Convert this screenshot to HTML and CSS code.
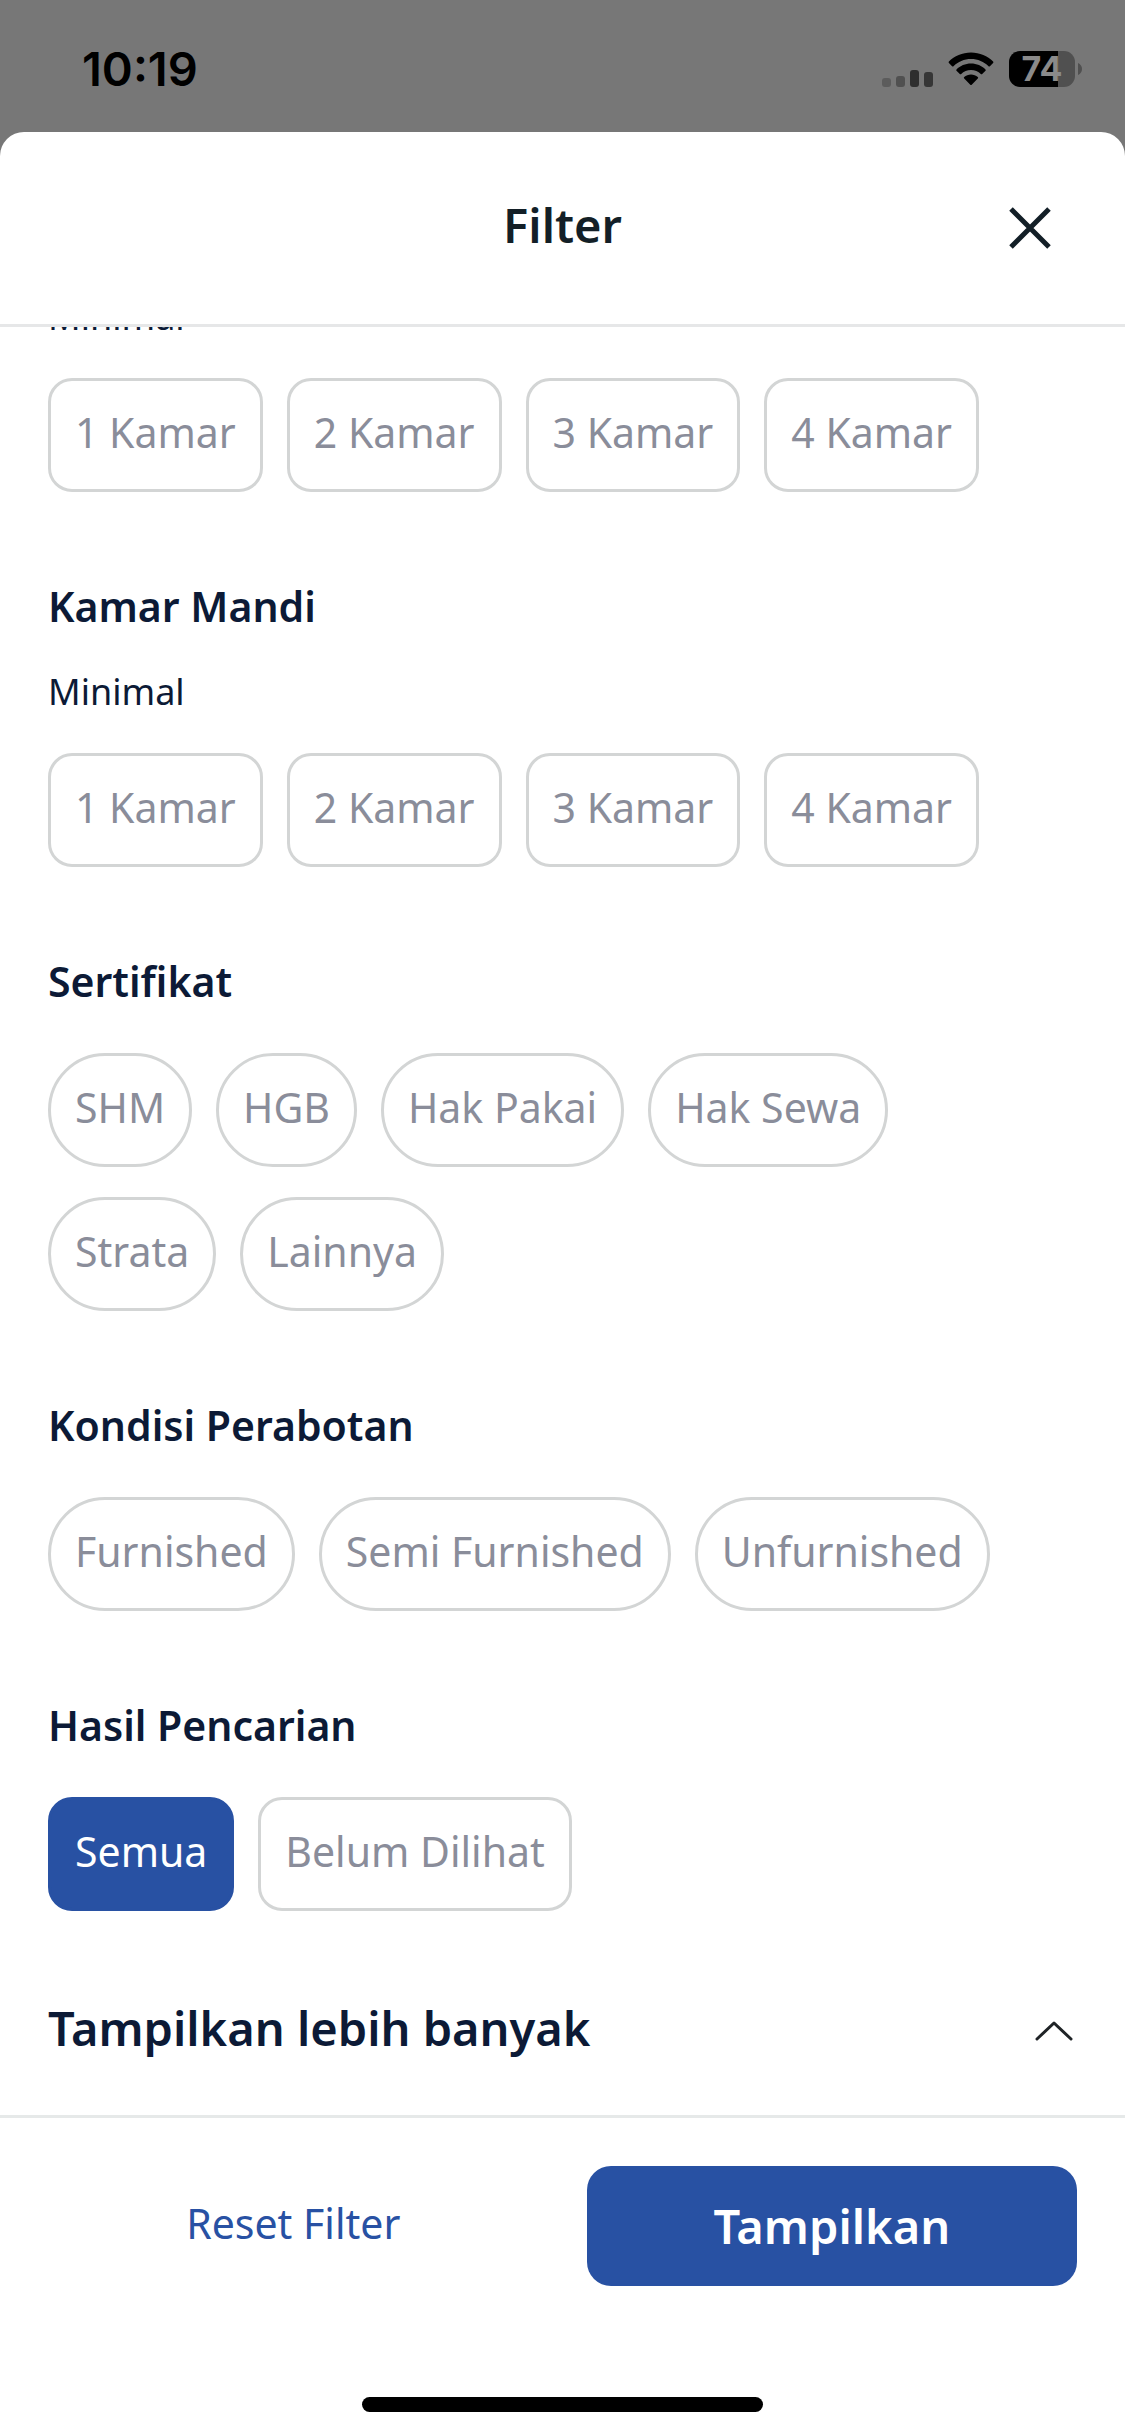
FILE: index.html
```
<!DOCTYPE html>
<html lang="id">
<head>
  <meta charset="UTF-8">
  <meta name="viewport" content="width=device-width, initial-scale=1.0">
  <title>Filter</title>
  <link rel="stylesheet" href="styles.css">
</head>
<body>

  <div class="status-bar">
    <span class="status-time">10:19</span>
    <div class="status-icons">
      <svg class="icon-signal" viewBox="0 0 51 18" width="51" height="18" aria-hidden="true">
        <rect x="0" y="9" width="9" height="9" rx="3" fill="#5c5c5c"/>
        <rect x="14" y="7" width="9" height="11" rx="3" fill="#505050"/>
        <rect x="28" y="1" width="9" height="17" rx="3" fill="#2e2e2e"/>
        <rect x="42" y="3" width="9" height="15" rx="3" fill="#363636"/>
      </svg>
      <svg class="icon-wifi" viewBox="0 0 46 34" width="46" height="34" aria-hidden="true">
        <path d="M23 0.5C14.2 0.5 6.4 4 0.9 9.6a1 1 0 0 0 0 1.4l3.2 3.2a1 1 0 0 0 1.4 0C10 9.7 16.200 7 23 7s13 2.700 17.500 7.200a1 1 0 0 0 1.400 0l3.200-3.200a1 1 0 0 0 0-1.400C39.600 4 31.800 0.500 23 0.500z"/>
        <path d="M23 11.500c-5.700 0-10.800 2.300-14.500 5.900a1 1 0 0 0 0 1.400l3.300 3.200a1 1 0 0 0 1.400 0c2.500-2.500 6-4 9.800-4s7.300 1.500 9.800 4a1 1 0 0 0 1.400 0l3.300-3.200a1 1 0 0 0 0-1.400C33.800 13.800 28.700 11.500 23 11.500z"/>
        <path d="M23 22.500c-2.600 0-5 1-6.800 2.600a1 1 0 0 0 0 1.500l6.100 6.100a1 1 0 0 0 1.400 0l6.100-6.100a1 1 0 0 0 0-1.500C28 23.500 25.600 22.500 23 22.500z"/>
      </svg>
      <div class="battery">
        <span class="battery-level">74</span>
        <svg viewBox="0 0 4 12" width="4" height="12" aria-hidden="true"><path d="M0 0c2.500 1 4 3.400 4 6s-1.500 5-4 6z" fill="#505050"/></svg>
      </div>
    </div>
  </div>

  <main class="sheet">
    <header class="sheet-header">
      <h1 class="sheet-title">Filter</h1>
      <button type="button" class="btn-close" aria-label="Tutup">
        <svg viewBox="0 0 42 42" width="42" height="42"><path d="M2 2l38 38M40 2L2 40" stroke="#131f27" stroke-width="5" fill="none"/></svg>
      </button>
    </header>

    <div class="sheet-content">
      <section class="filter-group">
        <p class="filter-label">Minimal</p>
        <div class="chips">
          <button type="button" class="chip">1 Kamar</button>
          <button type="button" class="chip">2 Kamar</button>
          <button type="button" class="chip">3 Kamar</button>
          <button type="button" class="chip">4 Kamar</button>
        </div>
      </section>

      <section class="filter-group">
        <h2 class="filter-title">Kamar Mandi</h2>
        <p class="filter-label">Minimal</p>
        <div class="chips">
          <button type="button" class="chip">1 Kamar</button>
          <button type="button" class="chip">2 Kamar</button>
          <button type="button" class="chip">3 Kamar</button>
          <button type="button" class="chip">4 Kamar</button>
        </div>
      </section>

      <section class="filter-group">
        <h2 class="filter-title">Sertifikat</h2>
        <div class="chips">
          <button type="button" class="chip chip-round">SHM</button>
          <button type="button" class="chip chip-round">HGB</button>
          <button type="button" class="chip chip-round">Hak Pakai</button>
          <button type="button" class="chip chip-round">Hak Sewa</button>
          <button type="button" class="chip chip-round">Strata</button>
          <button type="button" class="chip chip-round">Lainnya</button>
        </div>
      </section>

      <section class="filter-group">
        <h2 class="filter-title">Kondisi Perabotan</h2>
        <div class="chips">
          <button type="button" class="chip chip-round">Furnished</button>
          <button type="button" class="chip chip-round">Semi Furnished</button>
          <button type="button" class="chip chip-round">Unfurnished</button>
        </div>
      </section>

      <section class="filter-group">
        <h2 class="filter-title">Hasil Pencarian</h2>
        <div class="chips">
          <button type="button" class="chip chip-active" aria-pressed="true">Semua</button>
          <button type="button" class="chip" aria-pressed="false">Belum Dilihat</button>
        </div>
      </section>

      <button type="button" class="btn-more" aria-expanded="true">
        Tampilkan lebih banyak
        <svg viewBox="0 0 38 26" width="38" height="26" aria-hidden="true"><path d="M2 24L19 8l17 16" stroke="#1f2326" stroke-width="3" stroke-linecap="round" stroke-linejoin="round" fill="none"/></svg>
      </button>
    </div>

    <footer class="sheet-footer">
      <div class="actions">
        <button type="button" class="btn-reset">Reset Filter</button>
        <button type="button" class="btn-apply">Tampilkan</button>
      </div>
      <div class="home-indicator"></div>
    </footer>
  </main>

</body>
</html>
```

FILE: styles.css
```
* { margin: 0; padding: 0; box-sizing: border-box; }
body {
  display: flex;
  flex-direction: column;
  height: 100vh;
  background-color: #777777;
  color: #0c1a36;
  font-family: 'Noto Sans', 'Open Sans', sans-serif;
}
button { font-family: inherit; border: none; background: none; color: inherit; cursor: pointer; }
svg { display: block; flex-shrink: 0; }

/* Status bar */
.status-bar {
  display: flex;
  justify-content: space-between;
  align-items: center;
  height: 132px;
  padding: 6px 43px 0 82px;
  color: #000000;
  font-family: 'Inter', sans-serif;
}
.status-time { font-size: 47px; font-weight: 600; line-height: 56px; }
.status-icons { display: flex; align-items: center; gap: 15px; }
.icon-signal { align-self: flex-end; }
.battery { display: flex; align-items: center; gap: 3px; }
.battery-level {
  width: 66px;
  border-radius: 11px;
  background: linear-gradient(to right, #000000 74%, #505050 74%);
  color: #8a8a8a;
  font-size: 34px;
  font-weight: 700;
  line-height: 36px;
  text-align: center;
}

/* Sheet */
.sheet {
  flex: 1;
  min-height: 0;
  display: flex;
  flex-direction: column;
  background-color: #ffffff;
  border-radius: 24px 24px 0 0;
}
.sheet-header {
  display: grid;
  grid-template-columns: 1fr auto 1fr;
  align-items: center;
  height: 195px;
  padding: 0 74px;
  border-bottom: 3px solid #e6e7e8;
  color: #131f27;
}
.sheet-title { grid-column: 2; font-size: 47px; font-weight: 600; line-height: 60px; padding-bottom: 6px; }
.btn-close { justify-self: end; }

.sheet-content {
  flex: 1;
  min-height: 0;
  display: flex;
  flex-direction: column;
  justify-content: flex-end;
  gap: 84px;
  padding: 0 48px 54px;
  overflow: hidden;
}
.filter-title { font-size: 41px; font-weight: 600; line-height: 60px; margin-bottom: 32px; }
.filter-label { font-size: 36px; line-height: 48px; margin-bottom: 27px; }

.chips { display: flex; flex-wrap: wrap; gap: 30px 24px; padding-top: 10px; }
.chip {
  padding: 24px 24px 30px;
  border: 3px solid #d3d5d5;
  border-radius: 24px;
  color: #8a8d9a;
  font-size: 41px;
  line-height: 54px;
}
.chip-round { border-radius: 57px; }
.chip-active { background-color: #2851a3; border-color: #2851a3; color: #ffffff; }

.btn-more {
  display: flex;
  justify-content: space-between;
  align-items: center;
  padding-right: 4px;
  font-size: 47px;
  font-weight: 600;
  line-height: 66px;
}

/* Footer */
.sheet-footer { padding: 48px 48px 24px; border-top: 3px solid #e6e9e9; }
.actions { display: grid; grid-template-columns: 1fr 1fr; gap: 48px; margin-bottom: 111px; }
.btn-reset { padding-bottom: 6px; color: #2851a3; font-size: 41px; line-height: 54px; }
.btn-apply {
  height: 120px;
  border-radius: 24px;
  background-color: #2851a3;
  color: #ffffff;
  font-size: 47px;
  font-weight: 600;
}
.home-indicator { width: 39%; height: 15px; margin: 0 auto; border-radius: 8px; background-color: #000000; }
```
